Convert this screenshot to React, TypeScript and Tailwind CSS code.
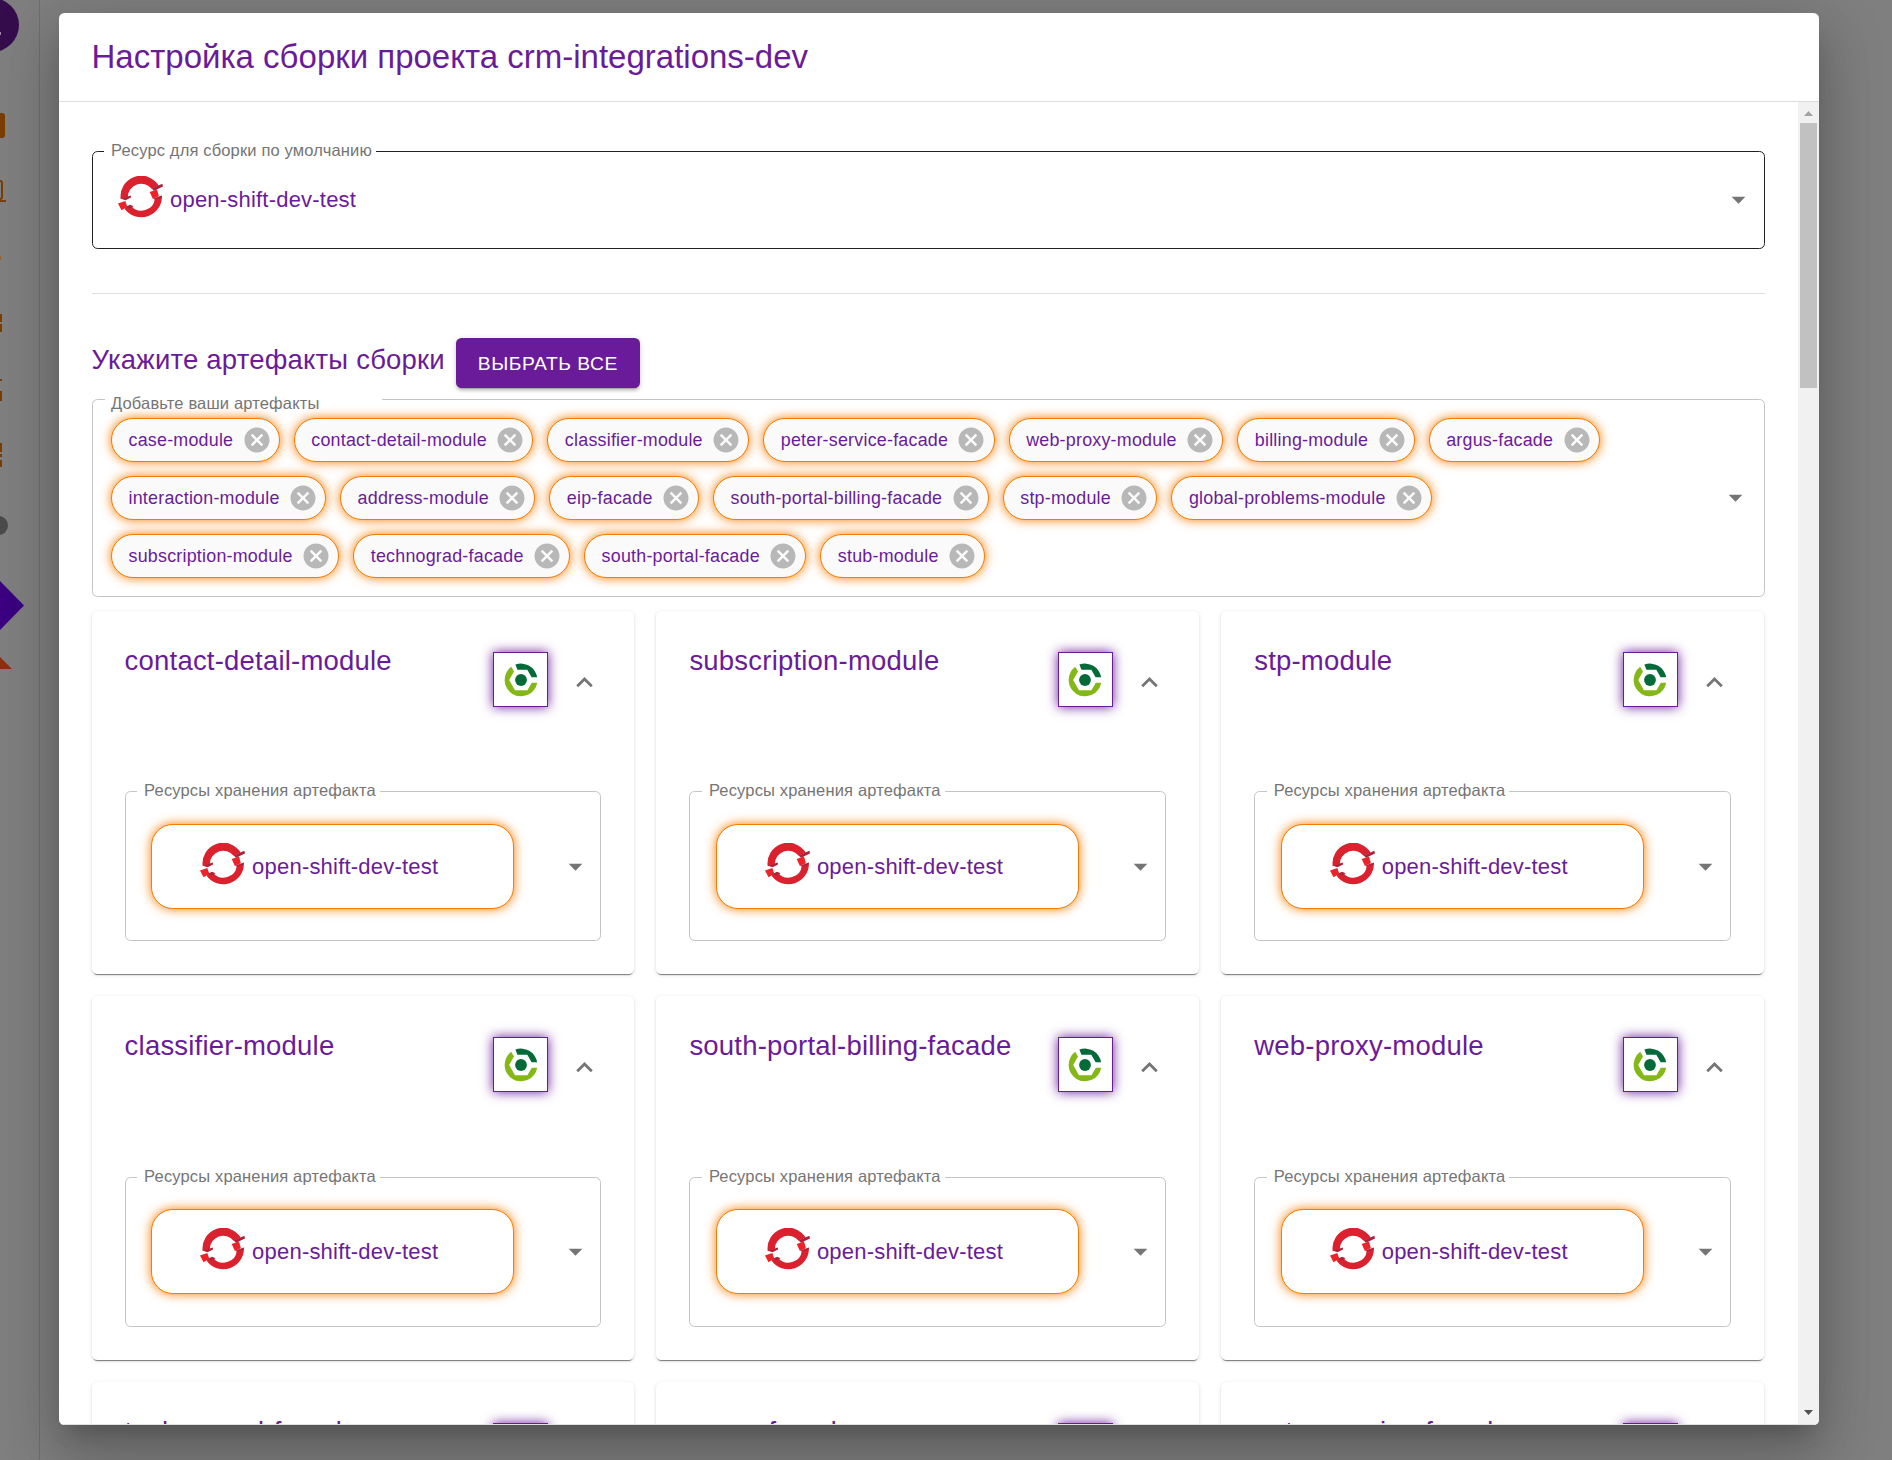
const OpenShiftLogo = () => (
  <svg width="45" height="42" viewBox="0 0 45 42" className="shrink-0">
    <path d="M2.7 23.2 A20.6 20.6 0 0 1 40.7 9.6 L33.6 12.8 A13.4 13.4 0 0 0 9.8 21 Z" fill="#db212e" />
    <path d="M43.9 19.8 A20.6 20.6 0 0 1 6.4 32.4 L12.8 29.6 A13.5 13.5 0 0 0 36.8 22.4 Z" fill="#db212e" />
    <path d="M31.7 15.9 L39 13.4 L40.9 20.2 L34.9 22.9 Z" fill="#ee2227" />
    <path d="M0 27.5 L7.3 25 L9.3 30.8 L3.5 34.3 Z" fill="#ee2227" />
    <path d="M33.6 12.6 L44.3 7.8 L45 10.6 L38.6 13.4 L36 14.8 Z" fill="#ae213b" />
    <path d="M2.9 22.7 L12.8 19.5 L13 21.4 L7.6 24.2 Z" fill="#ae213b" />
    <path d="M35.7 22.6 L43.9 19.6 L43.4 21.8 L36.6 23.6 Z" fill="#ae213b" />
    <path d="M6.7 31.6 L12 28.8 L15.6 30.2 L12 32.2 Z" fill="#ae213b" />
  </svg>
);

const GoCdLogo = () => (
  <svg width="34" height="34" viewBox="0 0 34 34" className="mr-[0.5px]">
    <path d="M7.2 3.8 A16.4 16.4 0 1 0 33.2 19.7 L27.8 19.7 L23.4 27.3 L11 27.3 L5.2 17 L10 8.6 Z" fill="#84b817" />
    <path d="M11.4 1.6 A16.4 16.4 0 0 1 33.2 14.3 L27.6 14.3 L23.3 6.8 L13.4 6.8 Z" fill="#046a38" />
    <circle cx="17" cy="17" r="5.9" fill="#046a38" />
  </svg>
);

const DropArrow = () => (
  <svg width="33" height="33" viewBox="0 0 24 24" fill="#757575" className="shrink-0">
    <path d="M7 10l5 5 5-5z" />
  </svg>
);

const Collapse = () => (
  <svg width="33" height="33" viewBox="0 0 24 24" fill="#757575" className="shrink-0">
    <path d="M12 8l-6 6 1.41 1.41L12 10.83l4.59 4.58L18 14z" />
  </svg>
);

const Cancel = () => (
  <svg width="30" height="30" viewBox="0 0 24 24" fill="#b8b8b8" className="ml-[-8.2px] mr-[7.2px] shrink-0">
    <path d="M12 2C6.47 2 2 6.47 2 12s4.47 10 10 10 10-4.47 10-10S17.53 2 12 2zm5 13.59L15.59 17 12 13.41 8.41 17 7 15.59 10.59 12 7 8.41 8.41 7 12 10.59 15.59 7 17 8.41 13.41 12 17 15.59z" />
  </svg>
);

const Label = ({ text, className }: { text: string; className: string }) => (
  <span className={`absolute bg-white whitespace-nowrap text-[16.5px] leading-[17px] tracking-[0.00938em] text-[#757575] ${className}`}>
    {text}
  </span>
);

const chipRows = [
  ["case-module", "contact-detail-module", "classifier-module", "peter-service-facade", "web-proxy-module", "billing-module", "argus-facade"],
  ["interaction-module", "address-module", "eip-facade", "south-portal-billing-facade", "stp-module", "global-problems-module"],
  ["subscription-module", "technograd-facade", "south-portal-facade", "stub-module"],
];

const Chip = ({ name }: { name: string }) => (
  <div className="flex h-[44px] items-center rounded-full border border-[#f57c00] bg-[#fafafa] text-[17.875px] tracking-[0.23px] text-[#6a1b9a] shadow-[0_0_11px_#f57c00]">
    <span className="px-[16.5px]">{name}</span>
    <Cancel />
  </div>
);

const modules = [
  "contact-detail-module",
  "subscription-module",
  "stp-module",
  "classifier-module",
  "south-portal-billing-facade",
  "web-proxy-module",
  "technograd-facade",
  "argus-facade",
  "peter-service-facade",
];

const ModuleCard = ({ name }: { name: string }) => (
  <section className="h-[363.4px] rounded-[5.5px] bg-white px-[33px] pt-[32px] shadow-[0_3px_1px_-2px_rgba(0,0,0,0.4),0_1px_1px_rgba(0,0,0,0.14),0_1px_4px_rgba(0,0,0,0.12)]">
    <div className="flex h-[148.2px] items-start">
      <h3 className="flex-1 whitespace-nowrap text-[27.5px] leading-[35px] tracking-[0.0075em] text-[#6a1b9a]">{name}</h3>
      <div className="mt-[9px] flex h-[55px] w-[55px] shrink-0 items-center justify-center border border-[#6a1b9a] shadow-[0_0_11px_#6a1b9a]">
        <GoCdLogo />
      </div>
      <div className="ml-[20px] mt-[23px]">
        <Collapse />
      </div>
    </div>
    <div className="relative flex h-[150px] items-center rounded-[5.5px] border border-[#c4c4c4] pl-[25.5px] pr-[8px]">
      <Label text="Ресурсы хранения артефакта" className="-top-[10px] left-[11.5px] pl-[7px] pr-[4px]" />
      <div className="flex h-[85px] w-[363px] items-center rounded-[22px] border border-[#f57c00] bg-white pl-[48px] shadow-[0_0_11px_#f57c00]">
        <div className="mb-[5px] mr-[7px]">
          <OpenShiftLogo />
        </div>
        <span className="text-[22px] tracking-[0.00938em] text-[#6a1b9a]">open-shift-dev-test</span>
      </div>
      <div className="ml-auto">
        <DropArrow />
      </div>
    </div>
  </section>
);

const Backdrop = () => (
  <div className="absolute inset-0 overflow-hidden bg-[#7f7f7f]">
    <div className="h-full w-[40px] border-r border-[#707070]" />
    <div className="absolute -left-[35px] -top-[2px] h-[54px] w-[54px] rounded-full bg-[#350d4d]" />
    <div className="absolute left-0 top-[32px] h-[3px] w-px bg-[#a08aa8]" />
    <div className="absolute -left-5 top-[113px] h-[25px] w-[25px] rounded-[3px] bg-[#7a3e00]" />
    <div className="absolute -left-5 top-[180px] h-[20px] w-[23px] rounded-[3px] border-2 border-[#7a3e00]" />
    <div className="absolute left-0 top-[200px] h-[2px] w-[6px] bg-[#7a3e00]" />
    <div className="absolute -left-[2px] top-[256px] h-[4px] w-[3px] rounded-full bg-[#9a5d1a]" />
    <div className="absolute left-0 top-[314px] h-[8px] w-[2px] bg-[#7a3e00]" />
    <div className="absolute left-0 top-[324px] h-[8px] w-[2px] bg-[#7a3e00]" />
    <div className="absolute left-0 top-[379px] h-[2px] w-[2px] bg-[#7a3e00]" />
    <div className="absolute left-0 top-[391px] h-[10px] w-[2px] bg-[#7a3e00]" />
    <div className="absolute left-0 top-[443px] h-[9px] w-[2px] bg-[#7a3e00]" />
    <div className="absolute left-0 top-[454px] h-[3px] w-[2px] bg-[#7a3e00]" />
    <div className="absolute left-0 top-[460px] h-[7px] w-[2px] bg-[#7a3e00]" />
    <div className="absolute -left-[20px] top-[516px] h-[19px] w-[28px] rounded-full bg-[#4b4b4b]" />
    <svg className="absolute left-0 top-[575px]" width="26" height="96">
      <path d="M0 6 L24 30.5 L0 55 Z" fill="#3b0080" />
      <path d="M0 82 L12 94 L0 94 Z" fill="#902f10" />
    </svg>
  </div>
);

const Scrollbar = () => (
  <div className="flex w-[21px] shrink-0 flex-col items-center bg-[#f1f1f1]">
    <svg width="21" height="21" className="shrink-0">
      <path d="M6 14 L10.5 9 L15 14 Z" fill="#a3a3a3" />
    </svg>
    <div className="h-[265px] w-[17px] bg-[#c1c1c1]" />
    <svg width="21" height="21" className="mt-auto shrink-0">
      <path d="M6 7 L15 7 L10.5 12 Z" fill="#505050" />
    </svg>
  </div>
);

export default function App() {
  return (
    <div className="relative h-[1460px] w-[1892px] overflow-hidden pl-[59px] pt-[13px] font-['Liberation_Sans',Arial,sans-serif]">
      <Backdrop />
      <div className="relative flex h-[1412px] w-[1760px] flex-col overflow-hidden rounded-[5.5px] bg-white shadow-[0_15px_21px_-10px_rgba(0,0,0,0.2),0_33px_52px_4px_rgba(0,0,0,0.14),0_12px_63px_11px_rgba(0,0,0,0.12)]">
        <header className="h-[89px] shrink-0 border-b border-[#dcdcdc] px-[32.5px] pt-[22px]">
          <h1 className="text-[33px] leading-[44px] text-[#6a1b9a]">Настройка сборки проекта crm-integrations-dev</h1>
        </header>
        <div className="flex min-h-0 flex-1 border-b border-[#e0e0e0]">
          <main className="min-w-0 flex-1 overflow-hidden pl-[33px] pr-[33px] pt-[49px]">
            <div className="relative flex h-[98px] items-center rounded-[5.5px] border border-[#212121] pb-[2px] pl-[25px] pr-[9px]">
              <Label text="Ресурс для сборки по умолчанию" className="-top-[10px] left-[11px] pl-[7px] pr-[4px]" />
              <div className="mb-[5px] mr-[7px]">
                <OpenShiftLogo />
              </div>
              <span className="text-[22px] tracking-[0.00938em] text-[#6a1b9a]">open-shift-dev-test</span>
              <div className="ml-auto">
                <DropArrow />
              </div>
            </div>
            <hr className="mt-[44px] border-[#dfdfdf]" />
            <div className="mt-[44px] flex h-[61px] items-start">
              <h2 className="-ml-[0.5px] mt-[4px] text-[27.5px] leading-[35px] tracking-[0.0075em] text-[#6a1b9a]">Укажите артефакты сборки</h2>
              <button className="ml-[11.5px] h-[50px] w-[184px] rounded-[5.5px] bg-[#6a1b9a] pr-px pt-[2px] text-[19.25px] font-medium tracking-[0.02857em] text-white shadow-[0_4px_1px_-3px_rgba(0,0,0,0.2),0_3px_3px_rgba(0,0,0,0.14),0_1px_7px_rgba(0,0,0,0.12)]">
                ВЫБРАТЬ ВСЕ
              </button>
            </div>
            <div className="relative flex h-[198px] items-center rounded-[5.5px] border border-[#c4c4c4] pl-[18px] pr-[12px]">
              <span className="absolute -top-[1px] left-[12px] h-px w-[277px] bg-white" />
              <Label text="Добавьте ваши артефакты" className="-top-[5px] left-[18px]" />
              <div className="relative flex flex-col gap-[14px]">
                {chipRows.map((row) => (
                  <div key={row[0]} className="flex gap-[14px]">
                    {row.map((name) => (
                      <Chip key={name} name={name} />
                    ))}
                  </div>
                ))}
              </div>
              <div className="mb-px ml-auto">
                <DropArrow />
              </div>
            </div>
            <div className="-ml-[0.4px] mr-px mt-[14px] grid grid-cols-3 gap-[22px]">
              {modules.map((name) => (
                <ModuleCard key={name} name={name} />
              ))}
            </div>
          </main>
          <Scrollbar />
        </div>
      </div>
    </div>
  );
}
